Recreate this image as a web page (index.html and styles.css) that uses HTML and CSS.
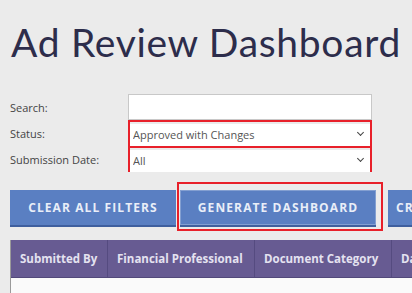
FILE: index.html
```html
<!DOCTYPE html>
<html lang="en">
<head>
    <meta charset="UTF-8">
    <meta name="viewport" content="width=device-width, initial-scale=1.0">
    <title>Ad Review Dashboard</title>
    <link rel="stylesheet" href="styles.css">
</head>
<body>
    <div class="page">
        <h1 class="page-title">Ad Review Dashboard</h1>

        <!-- Filters -->
        <form class="filters">
            <label for="search">Search:</label>
            <input type="text" id="search" class="field">

            <label for="status">Status:</label>
            <div class="select-wrap marked">
                <select id="status" class="field">
                    <option>Approved with Changes</option>
                </select>
            </div>

            <label for="submission-date">Submission Date:</label>
            <div class="select-wrap marked">
                <select id="submission-date" class="field">
                    <option>All</option>
                </select>
            </div>
        </form>

        <!-- Action Buttons -->
        <div class="actions">
            <button type="button" class="btn btn-clear">Clear All Filters</button>
            <button type="button" class="btn btn-generate">Generate Dashboard</button>
            <button type="button" class="btn btn-create">Create Report</button>
        </div>

        <!-- Results Table -->
        <div class="results">
            <div class="results-head">
                <div class="col col-submitted">Submitted By</div>
                <div class="col col-fp">Financial Professional</div>
                <div class="col col-category">Document Category</div>
                <div class="col col-date">Date Submitted</div>
            </div>
            <div class="results-body"></div>
        </div>
    </div>
</body>
</html>
```

FILE: styles.css
```css
/* General Styles */
html, body {
    overflow: hidden;
}

body {
    margin: 0;
    padding: 0;
    background-color: #ebebeb;
    font-family: 'Open Sans', Arial, sans-serif;
    color: #3a3a3a;
}

.page {
    padding: 0 0 0 10px;
    width: 460px;
}

.page-title {
    font-family: 'Lato', 'Open Sans', sans-serif;
    font-weight: 400;
    font-size: 39px;
    line-height: 1;
    color: #2d2d4b;
    margin: 0;
    padding: 23px 0 0 1px;
    letter-spacing: 0.7px;
    white-space: nowrap;
}

/* Filters */
.filters {
    display: grid;
    grid-template-columns: 118px 244px;
    grid-auto-rows: 26px;
    align-items: center;
    margin-top: 32px;
}

.filters label {
    font-size: 11px;
    color: #444;
    align-self: center;
}

.field {
    width: 100%;
    height: 100%;
    box-sizing: border-box;
    margin: 0;
    background: #fff;
    font-family: 'Open Sans', Arial, sans-serif;
    font-size: 11px;
    color: #555;
}

input.field {
    border: 1px solid #c8c8c8;
    height: 26px;
}

.select-wrap {
    position: relative;
    height: 26px;
    box-sizing: border-box;
}

.select-wrap select {
    appearance: none;
    -webkit-appearance: none;
    border: none;
    padding: 0 20px 0 3px;
    border-radius: 0;
}

.select-wrap::after {
    content: "";
    position: absolute;
    right: 7px;
    top: 8px;
    width: 4px;
    height: 4px;
    border-right: 1.5px solid #444;
    border-bottom: 1.5px solid #444;
    transform: rotate(45deg);
    pointer-events: none;
}

.marked {
    border: 2px solid #e8202a;
}

/* Buttons */
.actions {
    display: flex;
    gap: 4px;
    margin-top: 18px;
    height: 37px;
}

.btn {
    height: 37px;
    padding: 0 8px;
    border: none;
    border-bottom: 2px solid #3f5f9e;
    background-color: #5a7fc2;
    color: #e9eef8;
    font-family: 'Open Sans', Arial, sans-serif;
    font-weight: 700;
    font-size: 12px;
    letter-spacing: 1.1px;
    text-transform: uppercase;
    white-space: nowrap;
    flex-shrink: 0;
    cursor: pointer;
}

.btn-clear {
    width: 166px;
}

.btn-generate {
    width: 196px;
    position: relative;
    box-shadow: inset 0 0 0 1px rgba(255, 255, 255, 0.25);
}

.btn-generate::after {
    content: "";
    position: absolute;
    left: -3px;
    top: -8px;
    right: -7px;
    bottom: -6px;
    border: 2px solid #e8202a;
    pointer-events: none;
}

.btn-create {
    margin-left: 8px;
}

/* Results */
.results {
    margin-top: 13px;
    border-left: 1px solid #9a9a9a;
}

.results-head {
    display: flex;
    height: 37px;
    background-color: #675b92;
    border-bottom: 1px solid #52497a;
}

.col {
    display: flex;
    align-items: center;
    padding: 0 9px;
    font-size: 11.5px;
    font-weight: 700;
    color: #e4e2f0;
    border-right: 1px solid #554b80;
    white-space: nowrap;
    flex-shrink: 0;
    box-sizing: border-box;
}

.col-submitted { width: 97px; }
.col-fp { width: 147px; }
.col-category { width: 137px; }

.results-body {
    height: 40px;
    background-color: #fafafa;
}
```
